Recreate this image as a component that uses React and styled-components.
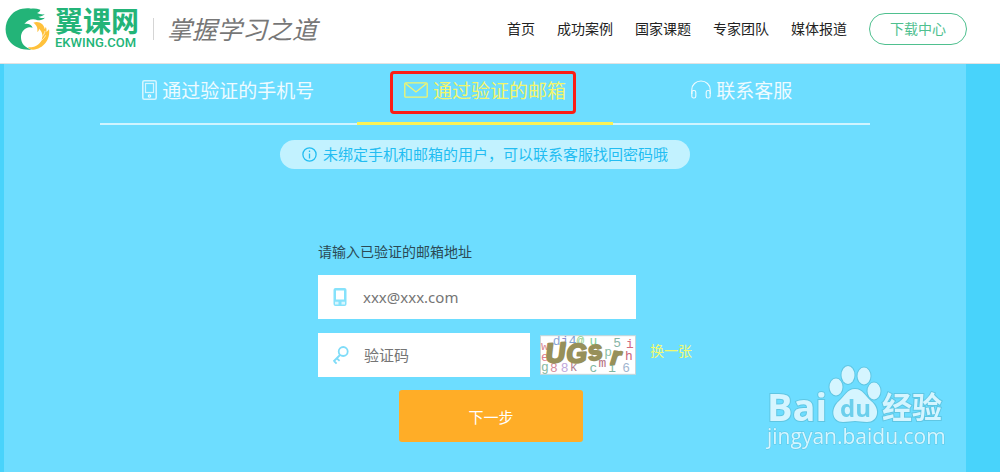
import React, { useState } from 'react';
import styled, { createGlobalStyle, css } from 'styled-components';

const GlobalStyle = createGlobalStyle`
    * {
        box-sizing: border-box;
    }
    body {
        margin: 0;
        font-family: 'Noto Sans', 'Noto Sans CJK SC', sans-serif;
        font-size: 14px;
        color: #222;
    }
    p {
        margin: 0;
    }
    a {
        color: inherit;
        text-decoration: none;
    }
    button, input {
        font-family: inherit;
    }
`;

const Page = styled.div`
    display: flex;
    flex-direction: column;
    min-height: 100vh;
    background-color: #48d3fb;
`;

/* header */
const Header = styled.header`
    display: flex;
    align-items: center;
    justify-content: space-between;
    padding: 6px 33px 12px 5px;
    background-color: #fff;
    border-bottom: 1px solid #e2e2e2;
`;
const Brand = styled.a`
    display: flex;
    align-items: center;
    height: 45px;
`;
const BrandName = styled.div`
    display: flex;
    flex-direction: column;
    margin-left: 4px;
    color: #23b478;
`;
const BrandTitle = styled.span`
    font-size: 28px;
    line-height: 28px;
    font-weight: 700;
`;
const BrandDomain = styled.span`
    font-family: Roboto, sans-serif;
    font-size: 13px;
    line-height: 16px;
    font-weight: 500;
`;
const Slogan = styled.span`
    margin-left: 14px;
    padding-left: 13px;
    border-left: 1px solid #d5d5d5;
    font-size: 25px;
    line-height: 22px;
    font-style: italic;
    color: #777;
`;
const Nav = styled.nav`
    display: flex;
    align-items: center;
    gap: 22px;
`;
const NavLink = styled.a`
    line-height: 20px;
`;
const DownloadLink = styled.a`
    width: 98px;
    padding: 4px 0;
    border: 1px solid #4fc08f;
    border-radius: 16px;
    line-height: 22px;
    text-align: center;
    color: #4fc08f;
`;

/* body */
const Main = styled.main`
    flex: 1;
    margin: 0 34px 0 4px;
    padding: 0 96px;
    background-color: #6dddff;
`;
const Tabs = styled.div`
    display: grid;
    grid-template-columns: repeat(3, 1fr);
    border-bottom: 2px solid #d0f4ff;
`;
const Tab = styled.button`
    position: relative;
    display: flex;
    align-items: center;
    justify-content: center;
    gap: 5px;
    height: 61px;
    margin-bottom: -2px;
    padding: 0 0 7px;
    background: none;
    border: none;
    border-bottom: 3px solid transparent;
    font-size: 19px;
    color: #effbff;
    cursor: pointer;
    ${({ $active }) =>
        $active &&
        css`
            border-bottom-color: #fbf254;
            color: #f3f56c;
        `}
`;
const Highlight = styled.span`
    position: absolute;
    inset: 7px 37px 8px 33px;
    border: 3px solid #fb1e14;
    border-radius: 4px;
    pointer-events: none;
`;
const Notice = styled.p`
    display: flex;
    align-items: center;
    justify-content: center;
    gap: 6px;
    width: fit-content;
    margin: 15px auto 0;
    padding: 3px 22px;
    border-radius: 15px;
    background-color: #c2f2ff;
    font-size: 15px;
    line-height: 23px;
    color: #22bdf2;
`;
const Form = styled.form`
    width: 414px;
    margin: 72px auto 30px;
    padding-left: 40px;
`;
const Label = styled.label`
    display: block;
    line-height: 22px;
    margin-bottom: 12px;
    color: #2b4a55;
`;
const Field = styled.div`
    display: flex;
    align-items: center;
    width: ${({ $width }) => $width}px;
    height: 44px;
    padding-left: 14px;
    background-color: #fff;
`;
const Input = styled.input`
    flex: 1;
    min-width: 0;
    height: 100%;
    margin-left: 15px;
    padding: 0;
    border: none;
    outline: none;
    background: none;
    font-size: 15px;
    color: #555;
    &::placeholder {
        color: #757575;
    }
`;
const CodeRow = styled.div`
    display: flex;
    align-items: center;
    margin-top: 14px;
    gap: 10px;
`;
const RefreshButton = styled.button`
    align-self: flex-start;
    margin: 8px 0 0 4px;
    padding: 0;
    background: none;
    border: none;
    font-size: 14px;
    line-height: 20px;
    white-space: nowrap;
    color: #f0fa70;
    cursor: pointer;
`;
const SubmitButton = styled.button`
    display: block;
    width: 184px;
    height: 52px;
    margin: 13px 0 0 81px;
    border: none;
    border-radius: 3px;
    background-color: #ffad27;
    font-size: 15px;
    color: #fff;
    cursor: pointer;
`;
const Watermark = styled.div`
    position: fixed;
    right: 52px;
    bottom: 18px;
    line-height: 0;
    pointer-events: none;
`;

const LogoMark = () => (
    <svg width='46' height='42' viewBox='15 12 136 126' aria-hidden='true'>
        <path
            fill='#23b478'
            d='M120 17C104 12 92 13 82 18c4-3 7-4 11-4C68 10 44 18 30 36 10 60 12 94 30 115c15 17 38 24 64 22-20-6-31-18-32-35-1-16 9-29 24-32 5-1 8 0 11 1-4-9-14-14-25-11 10-14 26-18 40-11 9 0 17-2 22-8-9 2-15 0-20-3 8 0 14-2 19-7-9 1-17-1-23-4 5-2 9-5 10-10z'
        />
        <path
            fill='#ffc13b'
            d='M99 56c17-6 32 4 34 19 2-2 3-4 3-7 3 5 3 10 2 15 4-2 6-4 8-8 5 31-17 60-48 62-7 0-12-3-15-7 24 1 41-11 43-32 1-10-3-18-10-24 0 5-2 8-5 10 2-13-3-22-12-28z'
        />
        <path fill='none' stroke='#fff' strokeWidth='2' d='M125 98c5-5 8-10 9-17M119 112c7-4 13-10 17-18' />
    </svg>
);

const PhoneIcon = () => (
    <svg width='15' height='20' viewBox='0 0 15 20' fill='none' stroke='currentColor' aria-hidden='true'>
        <rect x='.8' y='.8' width='13.4' height='18.4' rx='1.5' strokeWidth='1.6' opacity='.8' />
        <rect x='3.5' y='3.5' width='8' height='9' strokeWidth='1.2' opacity='.8' />
        <circle cx='7.5' cy='16' r='1.2' strokeWidth='1.2' />
    </svg>
);

const FieldPhoneIcon = () => (
    <svg width='16' height='18' viewBox='0 0 16 18' aria-hidden='true'>
        <rect x='1.5' width='13' height='18' rx='2' fill='#86e2fb' />
        <rect x='4' y='2.5' width='8' height='9' fill='#fff' />
        <path d='M3 13.8h3.5v2.7H3zM9.5 13.8H13v2.7H9.5z' fill='#d9f6fe' />
    </svg>
);

const MailIcon = () => (
    <svg width='24' height='16' viewBox='0 0 24 16' fill='none' stroke='currentColor' strokeWidth='1.3' aria-hidden='true'>
        <rect x='.8' y='.8' width='22.4' height='14.4' rx='1' />
        <path d='M1.5 1.5 12 10 22.5 1.5' />
    </svg>
);

const HeadsetIcon = () => (
    <svg width='20' height='19' viewBox='0 0 20 19' fill='none' stroke='currentColor' strokeWidth='1.1' aria-hidden='true'>
        <path d='M.8 14V9.5a9.2 8.5 0 0 1 18.4 0V14' />
        <rect x='.8' y='10.5' width='4' height='7.5' rx='1.8' />
        <rect x='15.2' y='10.5' width='4' height='7.5' rx='1.8' />
    </svg>
);

const InfoIcon = () => (
    <svg width='15' height='15' viewBox='0 0 15 15' fill='none' stroke='currentColor' strokeWidth='1.3' aria-hidden='true'>
        <circle cx='7.5' cy='7.5' r='6.6' />
        <path d='M7.5 6.5V11.5M7.5 3.5V5' />
    </svg>
);

const KeyIcon = () => (
    <svg width='17' height='19' viewBox='0 0 17 19' fill='none' stroke='#7fdcf8' strokeWidth='1.8' aria-hidden='true'>
        <circle cx='11.2' cy='5.5' r='4.5' />
        <path d='M8 9 1.5 15.5M5 12.5l2.6 2.4M2 15l2.6 2.6' />
    </svg>
);

const noise = [
    ['w', 1, 15, '#d98a96'],
    ['d', 13, 10, '#8aa5d6'],
    ['j', 21, 10, '#8a8fd0'],
    ['4', 29, 10, '#7fa0cf'],
    ['@', 37, 10, '#8fd08a'],
    ['u', 50, 10, '#7fcf98'],
    ['5', 74, 12, '#85b5a5'],
    ['i', 87, 13, '#d06a80'],
    ['e', 1, 26, '#e08090'],
    ['g', 1, 36, '#85b9a0'],
    ['8', 10, 37, '#d58a98'],
    ['8', 21, 37, '#bfa8dc'],
    ['k', 30, 36, '#b08090'],
    ['p', 65, 21, '#88bda5'],
    ['m', 59, 32, '#b56f80'],
    ['h', 86, 25, '#c96478'],
    ['c', 50, 37, '#80b5a0'],
    ['i', 69, 37, '#80b5a0'],
    ['6', 83, 37, '#9fb5cf'],
];

const Captcha = () => (
    <svg width='97' height='40' viewBox='0 0 97 40' role='img' aria-label='验证码图片'>
        <rect x='.5' y='.5' width='96' height='39' fill='#fff' stroke='#c8d5d8' />
        <g fontFamily='Liberation Mono, monospace' fontSize='13'>
            {noise.map(([char, x, y, fill]) => (
                <text key={`${char}${x}`} x={x} y={y} fill={fill}>
                    {char}
                </text>
            ))}
        </g>
        <g
            fontFamily='Liberation Sans, sans-serif'
            fontWeight='700'
            fontStyle='italic'
            fill='#97905a'
            stroke='#97905a'
            strokeWidth='2'
            strokeLinejoin='round'
        >
            <text x='6' y='28' fontSize='28' transform='rotate(-4 6 28)'>U</text>
            <text x='27' y='28' fontSize='27' transform='rotate(-3 27 28)'>G</text>
            <text x='50' y='26' fontSize='27' transform='rotate(-12 50 26)'>s</text>
            <text x='71' y='29' fontSize='25' transform='rotate(6 71 29)'>r</text>
        </g>
    </svg>
);

const tabs = [
    { id: 'phone', text: '通过验证的手机号', icon: <PhoneIcon /> },
    { id: 'mail', text: '通过验证的邮箱', icon: <MailIcon /> },
    { id: 'service', text: '联系客服', icon: <HeadsetIcon /> },
];

const links = ['首页', '成功案例', '国家课题', '专家团队', '媒体报道'];

const App = () => {
    const [active, setActive] = useState('mail');
    return (
        <Page>
            <GlobalStyle />
            <Header>
                <Brand href='#'>
                    <LogoMark />
                    <BrandName>
                        <BrandTitle>翼课网</BrandTitle>
                        <BrandDomain>EKWING.COM</BrandDomain>
                    </BrandName>
                    <Slogan>掌握学习之道</Slogan>
                </Brand>
                <Nav>
                    {links.map(link => (
                        <NavLink key={link} href='#'>
                            {link}
                        </NavLink>
                    ))}
                    <DownloadLink href='#'>下载中心</DownloadLink>
                </Nav>
            </Header>
            <Main>
                <Tabs>
                    {tabs.map(({ id, text, icon }) => (
                        <Tab key={id} type='button' $active={id === active} onClick={() => setActive(id)}>
                            {icon}
                            {text}
                            {id === active && <Highlight />}
                        </Tab>
                    ))}
                </Tabs>
                <Notice>
                    <InfoIcon />
                    未绑定手机和邮箱的用户，可以联系客服找回密码哦
                </Notice>
                <Form onSubmit={e => e.preventDefault()}>
                    <Label htmlFor='email'>请输入已验证的邮箱地址</Label>
                    <Field $width={318}>
                        <FieldPhoneIcon />
                        <Input id='email' type='email' placeholder='xxx@xxx.com' />
                    </Field>
                    <CodeRow>
                        <Field $width={212}>
                            <KeyIcon />
                            <Input type='text' aria-label='验证码' placeholder='验证码' />
                        </Field>
                        <Captcha />
                        <RefreshButton type='button'>换一张</RefreshButton>
                    </CodeRow>
                    <SubmitButton type='submit'>下一步</SubmitButton>
                </Form>
            </Main>
            <Watermark>
                <svg width='182' height='90' viewBox='0 0 182 90' fill='#d5f5ff' stroke='#5fc6e3' strokeWidth='2' paintOrder='stroke'>
                    <text x='1' y='57' fontFamily='Open Sans, sans-serif' fontWeight='700' fontSize='38'>Bai</text>
                    <ellipse cx='70' cy='23' rx='6.5' ry='8.5' />
                    <ellipse cx='82' cy='11' rx='6.5' ry='9' />
                    <ellipse cx='98' cy='12' rx='6.5' ry='8.5' />
                    <ellipse cx='108' cy='27' rx='6.5' ry='8.5' />
                    <path d='M89 25c8 0 10 7 16 12 10 8 7 21-4 21-5 0-8-1-12-1s-7 1-12 1c-11 0-13-13-4-21 6-5 8-12 16-12z' />
                    <text
                        x='74'
                        y='53'
                        fontFamily='Open Sans, sans-serif'
                        fontWeight='700'
                        fontSize='24'
                        fill='#6ccfec'
                        stroke='none'
                    >
                        du
                    </text>
                    <text x='116' y='54' fontFamily='Noto Sans CJK SC, sans-serif' fontWeight='700' fontSize='30'>经验</text>
                    <text x='1' y='80' fontFamily='Open Sans, sans-serif' fontWeight='500' fontSize='21' strokeWidth='1'>
                        jingyan.baidu.com
                    </text>
                </svg>
            </Watermark>
        </Page>
    );
};

export default App;
